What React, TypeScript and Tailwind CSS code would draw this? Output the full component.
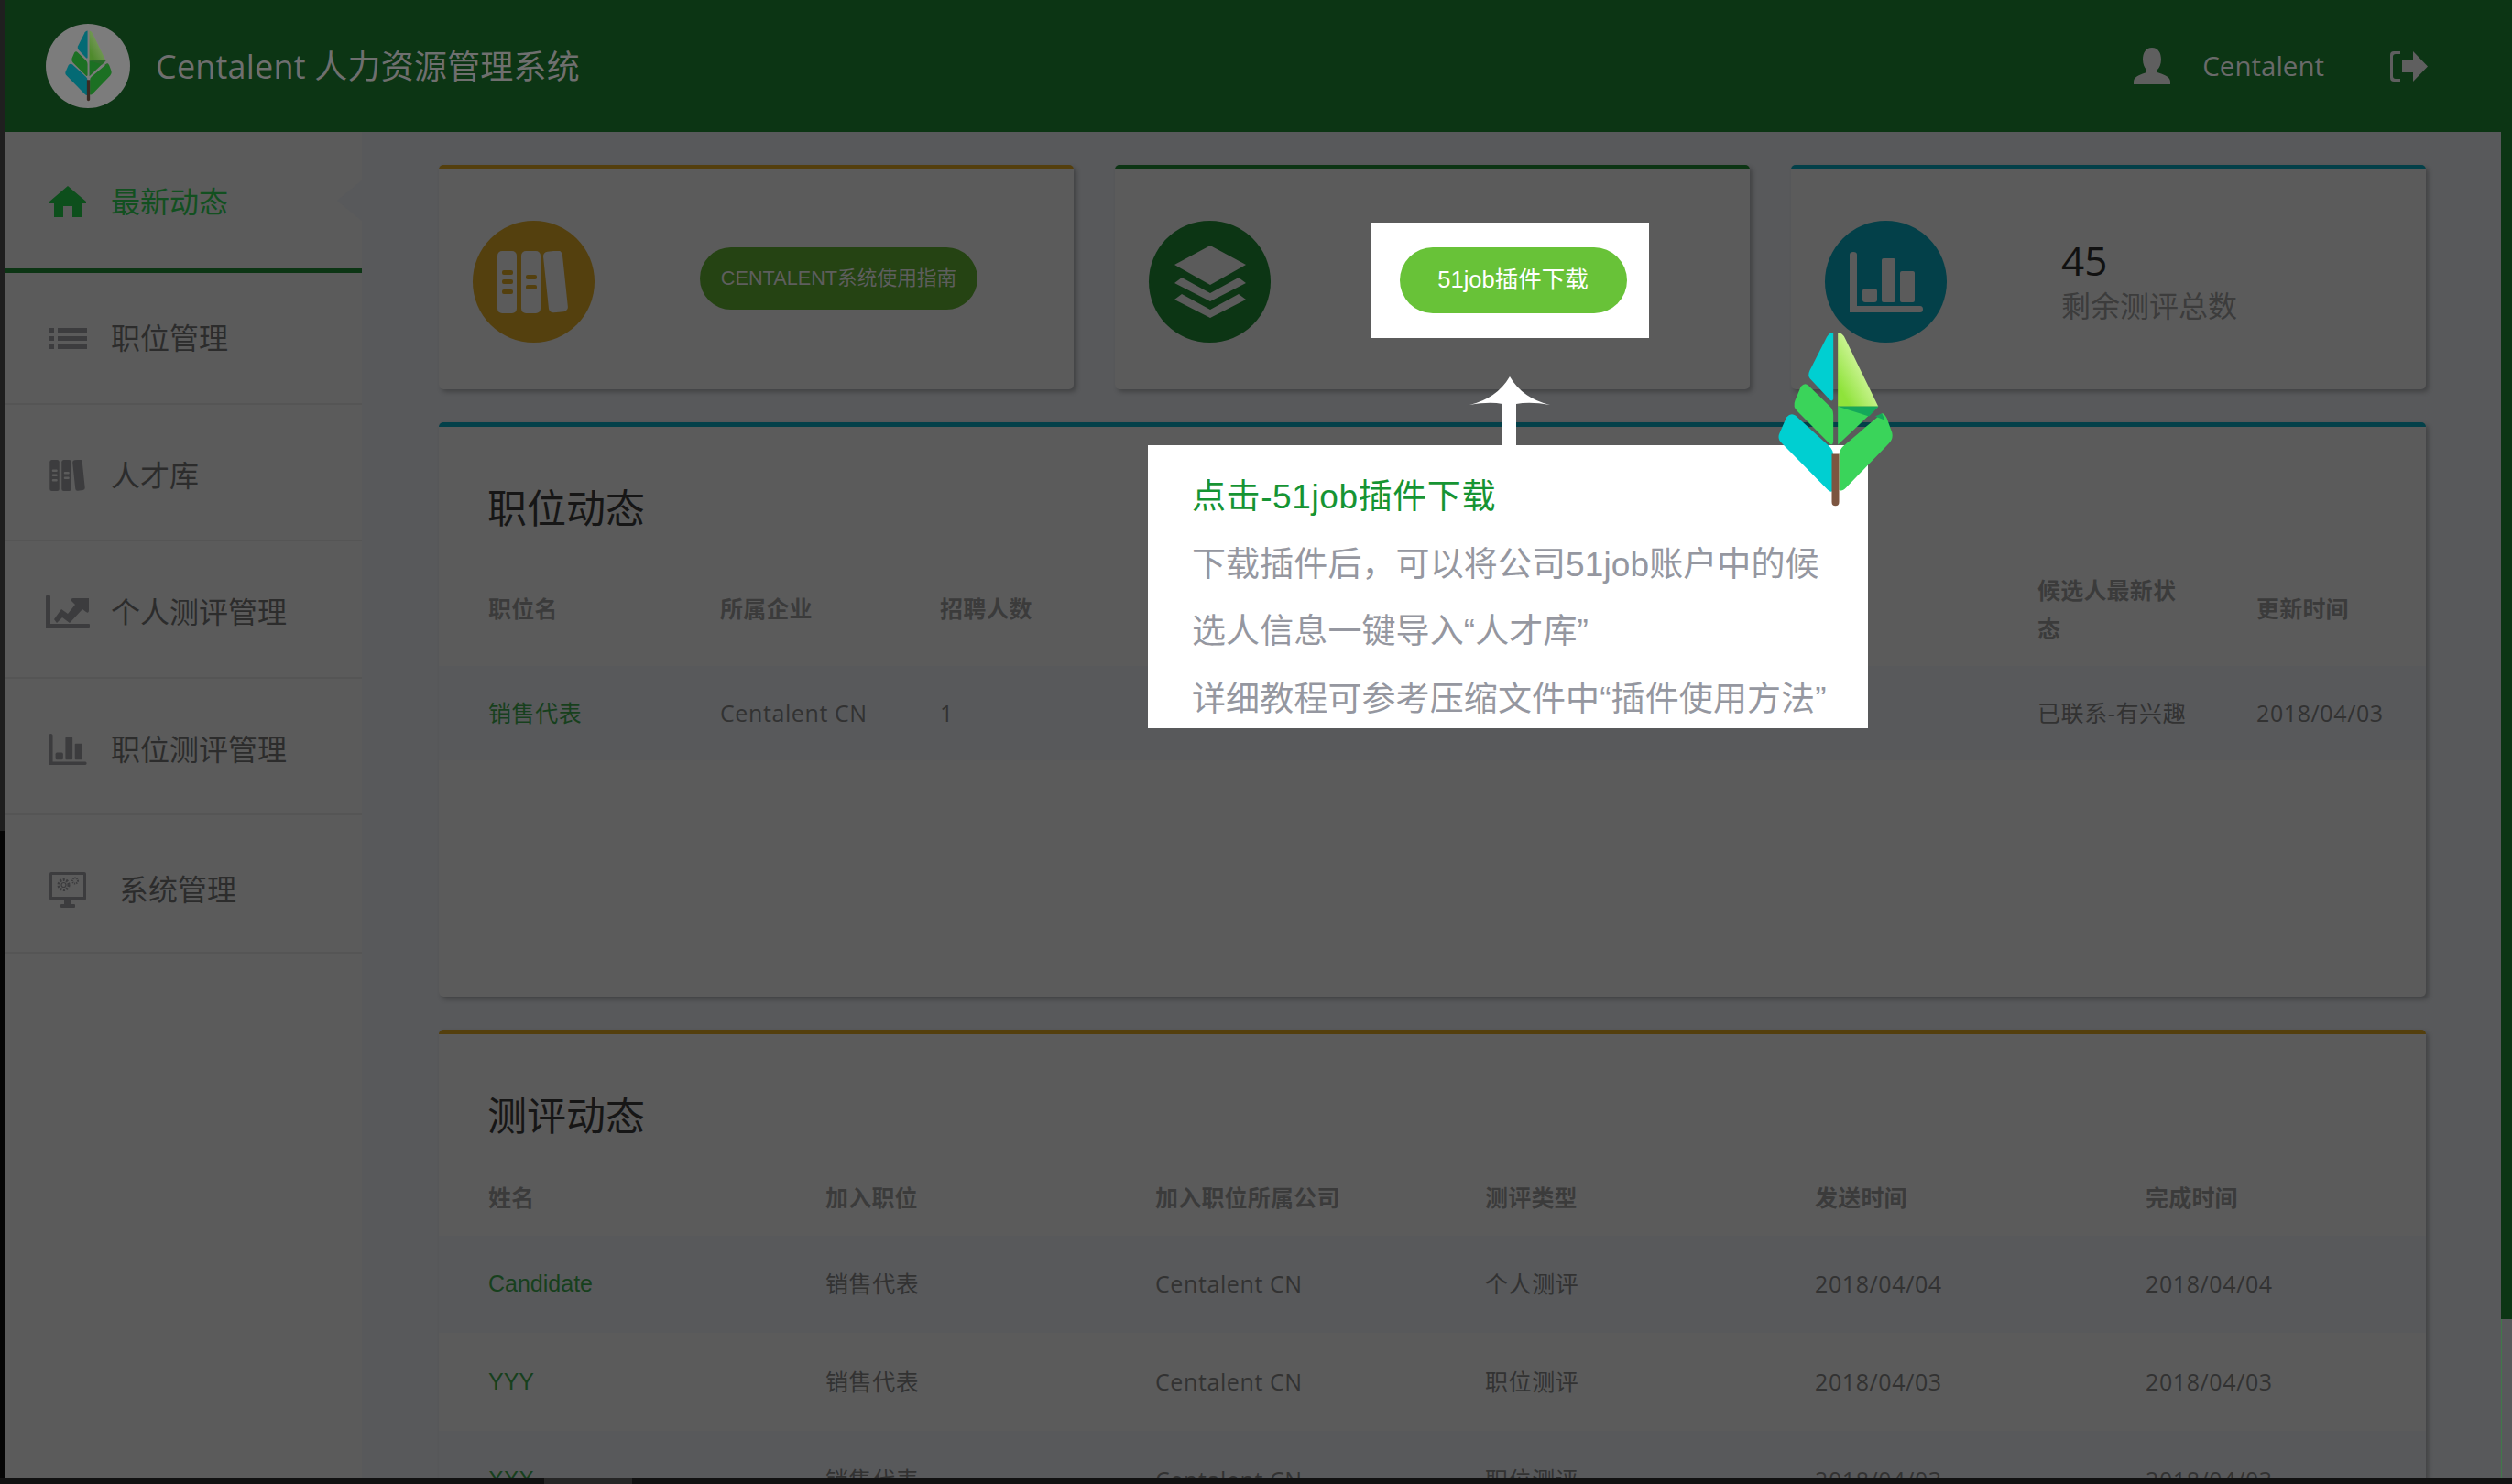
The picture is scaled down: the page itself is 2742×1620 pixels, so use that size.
const sans = "font-['Open_Sans','Noto_Sans_CJK_SC',sans-serif]";
const arial = "font-['Liberation_Sans','Noto_Sans_CJK_SC',sans-serif]";

function Tree({ id, cyan, green, dark, hi, lo, trunk, className }: { id: string; cyan: string; green: string; dark: string; hi: string; lo: string; trunk: string; className: string }) {
  return (
    <svg viewBox="120 95 380 575" className={className}>
      <defs>
        <linearGradient id={id} x1="0.85" y1="0.15" x2="0.15" y2="0.85">
          <stop offset="0" stopColor={hi} />
          <stop offset="1" stopColor={lo} />
        </linearGradient>
      </defs>
      <path d="M303 98V315Q300 326 292 318L228 250Q218 238 226 222L282 112Q290 98 303 98Z" fill={cyan} />
      <path d="M197 275Q210 260 222 272L292 340Q303 350 303 368V456Q300 470 290 460L185 355Q170 340 178 320Z" fill={green} />
      <path d="M150 375Q165 358 180 370L290 470Q303 482 303 500V612Q298 624 285 612L135 460Q118 445 128 425Z" fill={cyan} />
      <path d="M318 98Q333 98 342 118L450 340H318Z" fill={`url(#${id})`} />
      <path d="M318 340H450L318 465Z" fill={green} />
      <path d="M318 340H450L420 372Z" fill={dark} />
      <path d="M462 362Q470 362 478 378L495 425Q500 445 485 460L345 605Q330 620 322 612V500Q322 482 335 470Z" fill={green} />
      <path d="M440 372L462 362L472 385Z" fill={dark} />
      <path d="M298 495H322V652Q322 665 310 665Q298 665 298 652Z" fill={trunk} />
    </svg>
  );
}

function Books({ color, cut, className }: { color: string; cut: string; className: string }) {
  return (
    <svg viewBox="0 0 79 68" className={className}>
      <rect x="0" y="0" width="21" height="68" rx="5" fill={color} />
      <rect x="26" y="0" width="21" height="68" rx="5" fill={color} />
      <rect x="53" y="0" width="21" height="67" rx="5" fill={color} transform="rotate(-6 63 34)" />
      <rect x="5" y="21" width="12" height="5" rx="2" fill={cut} />
      <rect x="5" y="31" width="12" height="5" rx="2" fill={cut} />
      <rect x="5" y="42" width="12" height="5" rx="2" fill={cut} />
      <rect x="31" y="26" width="12" height="5" rx="2" fill={cut} />
      <rect x="31" y="37" width="12" height="5" rx="2" fill={cut} />
    </svg>
  );
}

function Bars({ color, className }: { color: string; className: string }) {
  return (
    <svg viewBox="0 0 80 66" className={className} fill={color}>
      <path d="M0 3Q0 0 4 0Q8 0 8 3V59H77Q80 59 80 62.500Q80 66 77 66H0Z" />
      <rect x="14" y="40" width="16" height="15" rx="3" />
      <rect x="35" y="7" width="15" height="48" rx="2" />
      <rect x="55" y="21" width="16" height="34" rx="2" />
    </svg>
  );
}

function HomeIcon() {
  return (
    <svg viewBox="0 0 40 34" className="w-[40px] h-[34px]" fill="#0d4f1c">
      <path d="M20 0L40 17V19H35V34H25V22H15V34H5V19H0V17Z" />
    </svg>
  );
}

function ListIcon() {
  return (
    <svg viewBox="0 0 41 23" className="w-[41px] h-[23px]" fill="#3c3c3e">
      <rect x="0" y="0" width="5" height="5" />
      <rect x="0" y="9" width="5" height="5" />
      <rect x="0" y="18" width="5" height="5" />
      <rect x="9" y="0" width="32" height="5" />
      <rect x="9" y="9" width="32" height="5" />
      <rect x="9" y="18" width="32" height="5" />
    </svg>
  );
}

function LineIcon() {
  return (
    <svg viewBox="0 0 48 36" className="w-[48px] h-[36px]" fill="#3c3c3e">
      <path d="M0 1Q0 0 1 0H4Q5 0 5 1V31H47Q48 31 48 32V35Q48 36 47 36H0Z" />
      <path d="M9 26L17 15L24 20L32 10L28 6Q27 3 30 3H47V16Q47 20 44 18L40 15L26 30L18 24L12 30Z" />
    </svg>
  );
}

function MonitorIcon() {
  return (
    <svg viewBox="0 0 40 39" className="w-[40px] h-[39px]">
      <rect x="0" y="0" width="40" height="31" rx="2" fill="#3c3c3e" />
      <rect x="3" y="3" width="34" height="24" fill="#5b5b5b" />
      <rect x="16" y="31" width="8" height="5" fill="#3c3c3e" />
      <rect x="12" y="35" width="16" height="4" rx="1" fill="#3c3c3e" />
      <circle cx="15.500" cy="14" r="5.500" fill="none" stroke="#3c3c3e" strokeWidth="3" strokeDasharray="2 1.500" />
      <circle cx="15.500" cy="14" r="2.500" fill="none" stroke="#3c3c3e" strokeWidth="1.200" />
      <circle cx="28" cy="9.500" r="3" fill="none" stroke="#3c3c3e" strokeWidth="2" strokeDasharray="1.200 1" />
    </svg>
  );
}

function UserIcon() {
  return (
    <svg viewBox="0 0 40 40" className="w-[40px] h-[40px]" fill="#5f5f5f">
      <path d="M20 0C27 0 30 6 30 13C30 18 28 22 26 24V27C31 29 40 31 40 37V40H0V37C0 31 9 29 14 27V24C12 22 10 18 10 13C10 6 13 0 20 0Z" />
    </svg>
  );
}

function LogoutIcon() {
  return (
    <svg viewBox="0 0 41 33" className="w-[41px] h-[33px]" fill="#5f5f5f">
      <path d="M0 4Q0 0 4 0H11V3H6Q3 3 3 6V27Q3 30 6 30H11V33H4Q0 33 0 29Z" />
      <path d="M13 10H25V0L41 16.500L25 33V23H13Z" />
    </svg>
  );
}

function Layers() {
  return (
    <svg viewBox="0 0 78 79" className="w-[78px] h-[79px]" fill="#5b5b5b">
      <path d="M39 0L78 21L39 43L0 21Z" />
      <path d="M0 41L8 35L39 52L70 35L78 41L39 61Z" />
      <path d="M0 59L8 53L39 70L70 53L78 59L39 79Z" />
    </svg>
  );
}

const menu = [
  { label: "最新动态", icon: <HomeIcon />, row: "h-[154px] pt-[2px] border-b-[5px] border-[#0c3514] text-[#125020]", text: "ml-[23px]" },
  { label: "职位管理", icon: <ListIcon />, row: "h-[144px] border-b-2 border-[#555555] text-[#2c2c2c]", text: "ml-[23px]" },
  { label: "人才库", icon: <Books color="#3c3c3e" cut="#5b5b5b" className="w-[42px] h-[34px]" />, row: "h-[149px] pt-[6px] border-b-2 border-[#555555] text-[#2c2c2c]", text: "ml-[23px]" },
  { label: "个人测评管理", icon: <LineIcon />, row: "h-[150px] pt-[6px] border-b-2 border-[#555555] text-[#2c2c2c]", text: "ml-[23px]" },
  { label: "职位测评管理", icon: <Bars color="#3c3c3e" className="w-[42px] h-[34px]" />, row: "h-[149px] pt-[6px] border-b-2 border-[#555555] text-[#2c2c2c]", text: "ml-[23px]" },
  { label: "系统管理", icon: <MonitorIcon />, row: "h-[151px] pt-[13px] border-b-2 border-[#555555] text-[#2c2c2c]", text: "ml-[32px]" },
];

const assessRows = [
  { name: "Candidate", type: "个人测评", date: "2018/04/04", row: "h-[106px] bg-[#58595b]" },
  { name: "YYY", type: "职位测评", date: "2018/04/03", row: "h-[107px]" },
  { name: "XXX", type: "职位测评", date: "2018/04/03", row: "h-[107px] bg-[#58595b]" },
];

export default function App() {
  return (
    <div className={`relative w-[2742px] h-[1620px] overflow-hidden flex flex-col bg-[#58595b] ${sans}`}>
      <div className="flex-1 min-h-0 flex">
        <div className="w-[6px] flex flex-col">
          <div className="h-[907px] bg-[#1f1f1f]" />
          <div className="flex-1 bg-[#050505]" />
        </div>

        <div className="flex-1 min-w-0 flex flex-col">
          <header className="h-[144px] shrink-0 bg-[#0c3514] flex items-center pl-[44px] pr-[80px]">
            <div className="w-[92px] h-[92px] rounded-full bg-[#7c7c7c] flex items-center justify-center">
              <Tree id="logo-leaf" cyan="#046a74" green="#1c7023" dark="#2a6a2a" hi="#8aa070" lo="#4f8a2c" trunk="#3b2a22" className="w-[53px] h-[78px]" />
            </div>
            <div className="ml-[28px] pt-[2px] text-[36px] tracking-[0.2px] text-[#6f6f6f]">Centalent 人力资源管理系统</div>
            <div className="ml-auto flex items-center">
              <UserIcon />
              <span className="ml-[35px] text-[29.500px] text-[#6a6a6a]">Centalent</span>
              <span className="ml-[72px]"><LogoutIcon /></span>
            </div>
          </header>

          <div className="flex-1 min-h-0 flex">
            <aside className="w-[389px] shrink-0 bg-[#5b5b5b] relative">
              {menu.map((m) => (
                <div key={m.label} className={`flex items-center pl-[44px] ${m.row}`}>
                  <span className="w-[48px] flex justify-center">{m.icon}</span>
                  <span className={`text-[32px] ${m.text}`}>{m.label}</span>
                </div>
              ))}
              <div className="absolute right-0 top-[53px] w-0 h-0 border-y-[22px] border-y-transparent border-r-[27px] border-r-[#58595b]" />
            </aside>

            <main className="flex-1 min-w-0 overflow-hidden pl-[84px] pr-[82px] pt-[36px]">
              <div className="grid grid-cols-3 gap-[45px]">
                <div className="h-[245px] bg-[#5b5b5b] border-t-[5px] border-[#543f0d] rounded-[5px] shadow-[3px_3px_5px_rgba(0,0,0,0.25)] flex items-center pt-[5px] pl-[37px]">
                  <div className="w-[133px] h-[133px] rounded-full bg-[#54400e] flex items-center justify-center">
                    <Books color="#5b5b5b" cut="#54400e" className="w-[79px] h-[68px]" />
                  </div>
                  <div className={`ml-[115px] w-[303px] h-[68px] -mt-[7px] rounded-full bg-[#254313] flex items-center justify-center text-[21.700px] text-[#5e5e5e] ${arial}`}>CENTALENT系统使用指南</div>
                </div>
                <div className="h-[245px] bg-[#5b5b5b] border-t-[5px] border-[#0c3514] rounded-[5px] shadow-[3px_3px_5px_rgba(0,0,0,0.25)] flex items-center pt-[5px] pl-[37px]">
                  <div className="w-[133px] h-[133px] rounded-full bg-[#0c3514] flex items-center justify-center">
                    <Layers />
                  </div>
                  <div className="ml-[110px] w-[303px] h-[126px] -mt-[4px] pl-[6px] bg-white flex items-center justify-center">
                    <div className={`w-[248px] h-[72px] rounded-full bg-[#68c238] flex items-center justify-center text-[25.500px] text-white ${arial}`}>51job插件下载</div>
                  </div>
                </div>
                <div className="h-[245px] bg-[#5b5b5b] border-t-[5px] border-[#034049] rounded-[5px] shadow-[3px_3px_5px_rgba(0,0,0,0.25)] flex items-center pt-[5px] pl-[37px]">
                  <div className="w-[133px] h-[133px] rounded-full bg-[#034049] flex items-center justify-center">
                    <Bars color="#5b5b5b" className="w-[80px] h-[66px]" />
                  </div>
                  <div className="ml-[125px] -mt-[3px]">
                    <div className="text-[44px] leading-[56px] text-[#111111]">45</div>
                    <div className="text-[32px] leading-[44px] text-[#3c3c3c]">剩余测评总数</div>
                  </div>
                </div>
              </div>

              <section className="mt-[36px] h-[627px] bg-[#5b5b5b] border-t-[5px] border-[#034049] rounded-[5px] shadow-[3px_3px_5px_rgba(0,0,0,0.25)]">
                <h2 className="h-[136px] pt-[65px] pl-[53px] text-[43px] leading-[48px] text-[#161616]">职位动态</h2>
                <div className="h-[125px] pl-[54px] grid grid-cols-[253px_240px_1198px_239px_1fr] items-center text-[25px] tracking-[0.2px] font-bold text-[#3b3b3b]">
                  <div>职位名</div>
                  <div>所属企业</div>
                  <div>招聘人数</div>
                  <div className="w-[165px] leading-[42px]">候选人最新状态</div>
                  <div>更新时间</div>
                </div>
                <div className="h-[103px] pl-[54px] bg-[#58595b] grid grid-cols-[253px_240px_1198px_239px_1fr] items-center text-[25px] tracking-[0.6px] text-[#323232]">
                  <div className="text-[#17401d]">销售代表</div>
                  <div>Centalent CN</div>
                  <div>1</div>
                  <div>已联系-有兴趣</div>
                  <div>2018/04/03</div>
                </div>
              </section>

              <section className="mt-[36px] bg-[#5b5b5b] border-t-[5px] border-[#543f0d] rounded-[5px] shadow-[3px_3px_5px_rgba(0,0,0,0.25)]">
                <h2 className="h-[138px] pt-[65px] pl-[53px] text-[43px] leading-[48px] text-[#161616]">测评动态</h2>
                <div className="h-[82px] pl-[54px] grid grid-cols-[368px_360px_360px_360px_361px_1fr] items-center text-[25px] tracking-[0.2px] font-bold text-[#3b3b3b]">
                  <div>姓名</div>
                  <div>加入职位</div>
                  <div>加入职位所属公司</div>
                  <div>测评类型</div>
                  <div>发送时间</div>
                  <div>完成时间</div>
                </div>
                {assessRows.map((r) => (
                  <div key={r.name} className={`pl-[54px] grid grid-cols-[368px_360px_360px_360px_361px_1fr] items-center text-[25px] tracking-[0.6px] text-[#323232] ${r.row}`}>
                    <div className={`text-[#17401d] tracking-normal ${arial}`}>{r.name}</div>
                    <div>销售代表</div>
                    <div>Centalent CN</div>
                    <div>{r.type}</div>
                    <div>{r.date}</div>
                    <div>{r.date}</div>
                  </div>
                ))}
              </section>
            </main>
          </div>
        </div>

        <div className="w-[12px] flex flex-col">
          <div className="h-[1440px] bg-[#0c3514]" />
          <div className="flex-1 bg-[#58595b] border-l border-[#3f7a4a]" />
        </div>
      </div>

      <div className="h-[7px] shrink-0 bg-[#111111] pl-[594px]">
        <div className="w-[96px] h-full bg-[#262626]" />
      </div>

      {/* guide popover, arrow and mascot lie over the dimmed page */}
      <svg viewBox="0 0 88 75" className="absolute left-[1604px] top-[411px] w-[88px] h-[75px]" fill="#ffffff">
        <path d="M44 0Q58 24 88 31Q66 27 51 30V75H36V30Q22 27 0 31Q30 24 44 0Z" />
      </svg>
      <div className={`absolute left-[1253px] top-[486px] w-[786px] h-[309px] bg-white pl-[48px] pt-[20px] text-[37px] leading-[73.600px] tracking-[0.1px] text-[#9597a0] ${arial}`}>
        <div className="text-[#169433] tracking-[0.6px]">点击-51job插件下载</div>
        <div>下载插件后，可以将公司51job账户中的候</div>
        <div>选人信息一键导入“人才库”</div>
        <div>详细教程可参考压缩文件中“插件使用方法”</div>
      </div>
      <Tree id="guide-leaf" cyan="#00cfd1" green="#3ad45a" dark="#14a85a" hi="#f5ffd0" lo="#8fe33b" trunk="#7c5540" className="absolute left-[1940px] top-[362px] w-[127px] h-[192px]" />
    </div>
  );
}
